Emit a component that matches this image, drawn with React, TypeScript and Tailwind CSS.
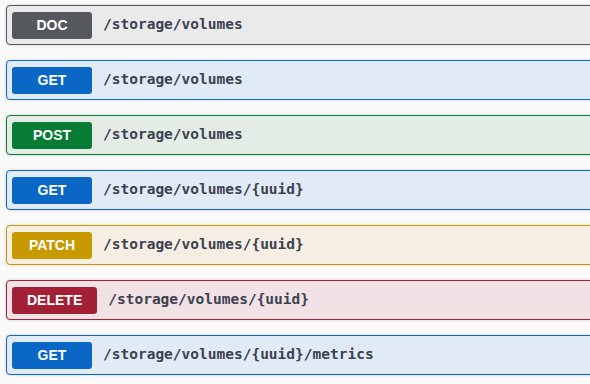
const OPS = [
  { method: "DOC", path: "/storage/volumes", badge: "bg-[#55585d]", card: "bg-[#e9eae9] border-[#55585d]" },
  { method: "GET", path: "/storage/volumes", badge: "bg-[#0b67c6]", card: "bg-[#e1ebf5] border-[#0b67c6]" },
  { method: "POST", path: "/storage/volumes", badge: "bg-[#087b34]", card: "bg-[#e3ede6] border-[#087b34]" },
  { method: "GET", path: "/storage/volumes/{uuid}", badge: "bg-[#0b67c6]", card: "bg-[#e1ebf5] border-[#0b67c6]" },
  { method: "PATCH", path: "/storage/volumes/{uuid}", badge: "bg-[#c99a00]", card: "bg-[#f6eee2] border-[#c99a00]" },
  { method: "DELETE", path: "/storage/volumes/{uuid}", badge: "bg-[#a21f35]", card: "bg-[#f1e3e5] border-[#a21f35]" },
  { method: "GET", path: "/storage/volumes/{uuid}/metrics", badge: "bg-[#0b67c6]", card: "bg-[#e1ebf5] border-[#0b67c6]" },
];

export default function App() {
  return (
    <div className="min-h-screen w-[590px] overflow-hidden bg-[#fafafa] pl-[6px] pt-[5px]">
      <div className="flex w-[620px] flex-col gap-[15px]">
        {OPS.map((op, i) => (
          <div
            key={i}
            className={`flex h-[40px] items-center rounded-[4px] border px-[5px] shadow-[0_0_3px_rgba(0,0,0,0.19)] ${op.card}`}
          >
            <span
              className={`flex h-[27px] min-w-[80px] items-center justify-center rounded-[3px] px-[15px] text-[14px] font-bold text-white ${op.badge}`}
              style={{ fontFamily: '"Liberation Sans", Arial, sans-serif' }}
            >
              {op.method}
            </span>
            <span
              className="pl-[11px] text-[14.5px] font-semibold text-[#3b4151]"
              style={{ fontFamily: '"DejaVu Sans Mono", "Liberation Mono", monospace' }}
            >
              {op.path}
            </span>
          </div>
        ))}
      </div>
    </div>
  );
}
